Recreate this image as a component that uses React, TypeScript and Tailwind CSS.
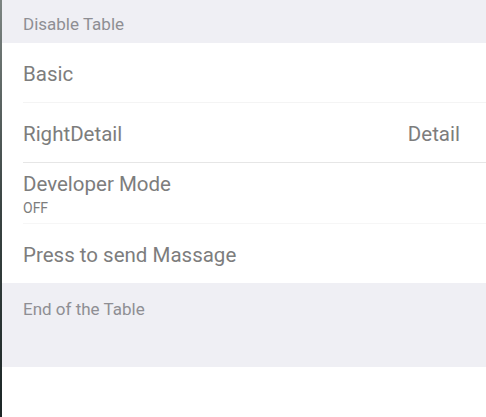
import React from "react";

export default function App() {
  return (
    <div className="flex h-[417px] w-[486px] overflow-hidden bg-white" style={{ fontFamily: "Roboto, 'Noto Sans', sans-serif" }}>
      <div className="w-[2px] shrink-0 bg-gradient-to-b from-[#7d8582] via-[#3a4443] to-[#1c2626]" />
      <div className="flex flex-1 flex-col">
        <div className="h-[43px] bg-[#efeff4] pl-[21px] pt-[14px] text-[17px] leading-[20px] text-[#8e8e93]">
          Disable Table
        </div>
        <div className="flex h-[59px] items-center pl-[21px] pt-[4px] text-[20.5px] text-[#7d7d7d]">Basic</div>
        <div className="ml-[21px] h-px bg-[#f4f4f4]" />
        <div className="flex h-[59px] items-center justify-between pl-[21px] pr-[26px] pt-[4px] text-[20.5px] text-[#7d7d7d]">
          <span>RightDetail</span>
          <span>Detail</span>
        </div>
        <div className="ml-[21px] h-px bg-[#e6e6e6]" />
        <div className="flex h-[60px] flex-col pl-[21px] pt-[9px] text-[#7d7d7d]">
          <span className="text-[20.5px] leading-[24px]">Developer Mode</span>
          <span className="mt-[4px] text-[14px] leading-[16px]">OFF</span>
        </div>
        <div className="ml-[21px] h-px bg-[#f6f6f6]" />
        <div className="flex h-[59px] items-center pl-[21px] pt-[4px] text-[20.5px] text-[#7d7d7d]">Press to send Massage</div>
        <div className="h-[84px] bg-[#efeff4] pl-[21px] pt-[16px] text-[17px] leading-[20px] text-[#8e8e93]">
          End of the Table
        </div>
      </div>
    </div>
  );
}
